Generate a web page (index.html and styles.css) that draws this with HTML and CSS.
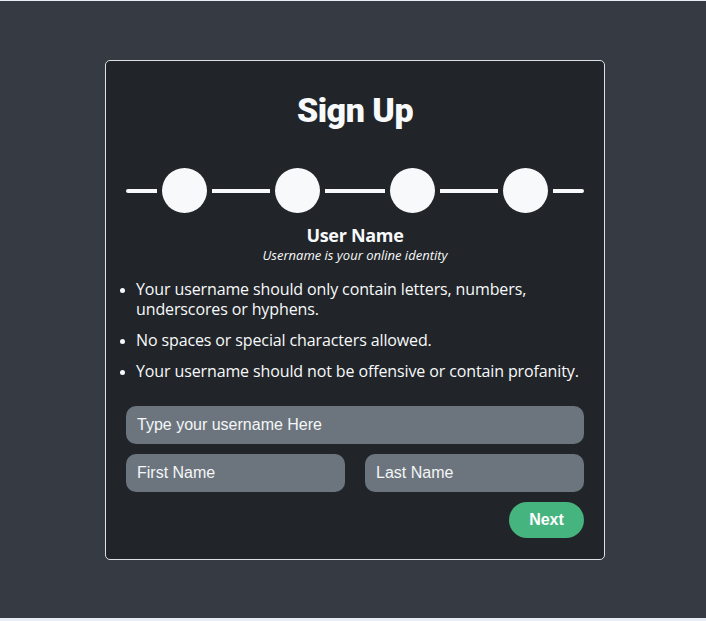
FILE: index.html
```html
<!DOCTYPE html>
<html>
<head>
<meta charset="utf-8">
<link rel="stylesheet" href="styles.css">
</head>
<body>
<div class="page">
  <div class="card">
    <h1 class="title">Sign Up</h1>
    <div class="stepper">
      <div class="step"><span class="line"></span><span class="dot"></span><span class="line"></span></div>
      <div class="step"><span class="line"></span><span class="dot"></span><span class="line"></span></div>
      <div class="step"><span class="line"></span><span class="dot"></span><span class="line"></span></div>
      <div class="step"><span class="line"></span><span class="dot"></span><span class="line"></span></div>
    </div>
    <h2 class="step-title">User Name</h2>
    <p class="step-sub">Username is your online identity</p>
    <ul class="rules">
      <li>Your username should only contain letters, numbers, underscores or hyphens.</li>
      <li>No spaces or special characters allowed.</li>
      <li>Your username should not be offensive or contain profanity.</li>
    </ul>
    <input class="field" type="text" placeholder="Type your username Here">
    <div class="row">
      <input class="field" type="text" placeholder="First Name">
      <input class="field" type="text" placeholder="Last Name">
    </div>
    <div class="actions">
      <button class="next" type="button">Next</button>
    </div>
  </div>
</div>
</body>
</html>
```
FILE: styles.css
```css
html {
  background: #e8edf3;
}
body {
  margin: 1px 0 0;
  background: #363a42;
  min-height: 617px;
  font-family: "Open Sans", "Noto Sans", sans-serif;
  color: #f8f9fa;
}
.page {
  padding: 59px 0 0 105px;
}
.card {
  box-sizing: border-box;
  width: 500px;
  height: 500px;
  background: #212529;
  border: 1px solid #dcdfe3;
  border-radius: 5px;
  padding: 20px;
}
.title {
  margin: 7px 0 0;
  text-align: center;
  font-family: "Roboto", sans-serif;
  font-weight: 900;
  font-size: 34px;
  line-height: 44px;
  letter-spacing: -0.5px;
  color: #f8f9fa;
}
.stepper {
  display: flex;
  margin-top: 36px;
}
.step {
  flex: 1;
  display: flex;
  align-items: center;
  gap: 5px;
}
.line {
  flex: 1;
  height: 4px;
  background: #f8f9fa;
}
.step:first-child .line:first-child {
  border-radius: 2px 0 0 2px;
}
.step:last-child .line:last-child {
  border-radius: 0 2px 2px 0;
}
.step .line:first-child { margin-left: -2.5px; }
.step .line:last-child { margin-right: -2.5px; }
.step:first-child .line:first-child { margin-left: 0; }
.step:last-child .line:last-child { margin-right: 0; }
.dot {
  width: 45px;
  height: 45px;
  border-radius: 50%;
  background: #f8f9fa;
  flex: none;
}
.step-title {
  margin: 10px 0 0;
  text-align: center;
  font-family: "Open Sans", sans-serif;
  font-weight: 700;
  font-size: 18px;
  line-height: 24px;
  letter-spacing: -0.3px;
}
.step-sub {
  margin: 0;
  text-align: center;
  font-style: italic;
  font-size: 13px;
  line-height: 17px;
}
.rules {
  margin: 15px 0 0;
  padding-left: 10px;
  font-size: 16px;
  line-height: 20px;
  letter-spacing: -0.12px;
}
.rules li {
  margin-bottom: 11px;
}
.rules li::marker {
  font-size: 13px;
}
.field {
  box-sizing: border-box;
  display: block;
  width: 100%;
  height: 38px;
  border: none;
  border-radius: 10px;
  background: #6c757d;
  padding: 0 11px;
  font-family: "Liberation Sans", Arial, sans-serif;
  font-size: 16px;
  color: #fff;
  outline: none;
}
.field::placeholder {
  color: #f4f6f8;
  opacity: 1;
}
.rules + .field {
  margin-top: 25px;
}
.row {
  display: flex;
  gap: 20px;
  margin-top: 10px;
}
.actions {
  display: flex;
  justify-content: flex-end;
  margin-top: 10px;
}
.next {
  width: 75px;
  height: 36px;
  border: none;
  border-radius: 18px;
  background: #45b47f;
  color: #fff;
  font-family: "Liberation Sans", Arial, sans-serif;
  font-weight: 700;
  font-size: 16px;
  padding: 0;
}
```
